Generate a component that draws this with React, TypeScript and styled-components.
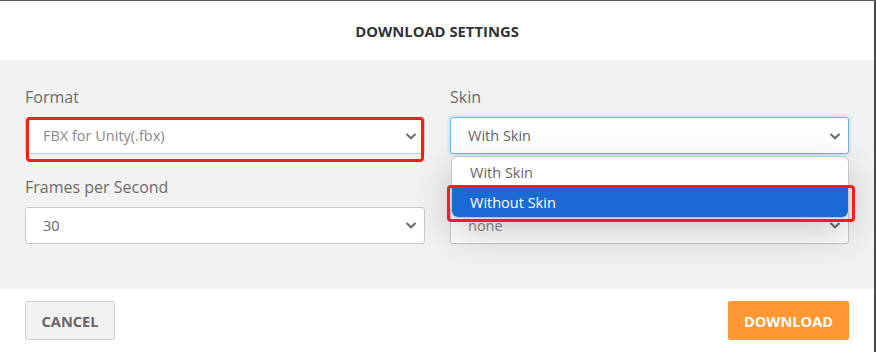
import styled, { createGlobalStyle } from 'styled-components'

const GlobalStyle = createGlobalStyle`
  html, body {
    margin: 0;
    padding: 0;
    background: #ffffff;
  }
  body {
    font-family: "Open Sans", "Noto Sans", sans-serif;
  }
`

const Modal = styled.div`
  width: 876px;
  height: 352px;
  box-sizing: border-box;
  border-top: 1px solid #5a5a5a;
  border-right: 2px solid #4a4a4a;
  display: flex;
  flex-direction: column;
  background: #fff;
  overflow: hidden;
`

const Header = styled.div`
  height: 59px;
  display: flex;
  align-items: center;
  justify-content: center;
  font-size: 14.8px;
  font-weight: 700;
  color: #333;
`

const Body = styled.div`
  background: #f2f2f2;
  padding: 26px 25px 44px 25px;
  display: grid;
  grid-template-columns: 400px 399px;
  column-gap: 25px;
  row-gap: 20px;
  height: 229px;
  box-sizing: border-box;
`

const Field = styled.div`
  position: relative;
  display: flex;
  flex-direction: column;
  gap: 9px;
`

const Label = styled.label`
  font-size: 16px;
  line-height: 22px;
  height: 22px;
  color: #6b6b6b;
`

const SelectBox = styled.div<{ $focused?: boolean; $muted?: boolean }>`
  height: 37px;
  box-sizing: border-box;
  background: #fff;
  border: 1px solid ${(p) => (p.$focused ? '#6cb8dc' : '#c9c9c9')};
  border-radius: 3px;
  box-shadow: ${(p) => (p.$focused ? '0 0 4px rgba(102, 175, 233, 0.55)' : 'none')};
  display: flex;
  align-items: center;
  justify-content: space-between;
  padding: 0 6px 0 17px;
  font-size: 14.5px;
  color: ${(p) => (p.$muted ? '#8a8a8a' : '#666')};
`

const Chevron = () => (
  <svg width="14" height="10" viewBox="0 0 14 10">
    <path d="M2.5 3 L7 7.3 L11.5 3" fill="none" stroke="#6a6a6a" strokeWidth="2" />
  </svg>
)

const Highlight = styled.div<{ $top: number; $left: number; $right: number; $bottom: number }>`
  position: absolute;
  top: ${(p) => p.$top}px;
  left: ${(p) => p.$left}px;
  right: ${(p) => p.$right}px;
  bottom: ${(p) => p.$bottom}px;
  border: 3.5px solid #f51f1a;
  border-radius: 4px;
  pointer-events: none;
  z-index: 3;
`

const SelectWrap = styled.div`
  position: relative;
`

const Menu = styled.div`
  position: absolute;
  top: 39px;
  left: 1px;
  right: 0;
  z-index: 2;
  background: #fff;
  border: 1px solid #c4c4c4;
  border-radius: 6px;
  box-shadow: 0 14px 40px rgba(0, 0, 0, 0.22);
`

const Options = styled.div`
  border-radius: 6px;
  overflow: hidden;
  position: relative;
`

const Option = styled.div<{ $active?: boolean }>`
  height: 30px;
  display: flex;
  align-items: center;
  padding-left: 18px;
  font-size: 14.5px;
  color: ${(p) => (p.$active ? '#fff' : '#666')};
  background: ${(p) => (p.$active ? '#1b69d5' : 'transparent')};
`

const Footer = styled.div`
  flex: 1;
  display: flex;
  justify-content: space-between;
  align-items: flex-start;
  padding: 12px 25px 0 25px;
`

const Button = styled.button<{ $primary?: boolean }>`
  height: 39px;
  box-sizing: border-box;
  padding: 0 12px;
  font-family: "Open Sans", "Noto Sans", sans-serif;
  font-size: 14.6px;
  font-weight: 700;
  border-radius: 2px;
  border: 1px solid ${(p) => (p.$primary ? '#ff9733' : '#cfcfcf')};
  background: ${(p) => (p.$primary ? '#ff9733' : '#f2f2f2')};
  color: ${(p) => (p.$primary ? '#fff' : '#666')};
  min-width: ${(p) => (p.$primary ? '121px' : '90px')};
`

export default function App() {
  return (
    <>
      <GlobalStyle />
      <Modal>
        <Header>DOWNLOAD SETTINGS</Header>
        <Body>
          <Field>
            <Label>Format</Label>
            <SelectWrap>
              <SelectBox $muted>
                FBX for Unity(.fbx)
                <Chevron />
              </SelectBox>
              <Highlight $top={0} $left={1} $right={1} $bottom={-8} />
            </SelectWrap>
          </Field>
          <Field>
            <Label>Skin</Label>
            <SelectWrap>
              <SelectBox $focused>
                With Skin
                <Chevron />
              </SelectBox>
              <Menu>
                <Options>
                  <Option>With Skin</Option>
                  <Option $active>Without Skin</Option>
                </Options>
                <Highlight $top={28} $left={-5} $right={-7} $bottom={-5} />
              </Menu>
            </SelectWrap>
          </Field>
          <Field>
            <Label>Frames per Second</Label>
            <SelectBox>
              30
              <Chevron />
            </SelectBox>
          </Field>
          <Field>
            <Label />
            <SelectBox $muted>
              none
              <Chevron />
            </SelectBox>
          </Field>
        </Body>
        <Footer>
          <Button>CANCEL</Button>
          <Button $primary>DOWNLOAD</Button>
        </Footer>
      </Modal>
    </>
  )
}
